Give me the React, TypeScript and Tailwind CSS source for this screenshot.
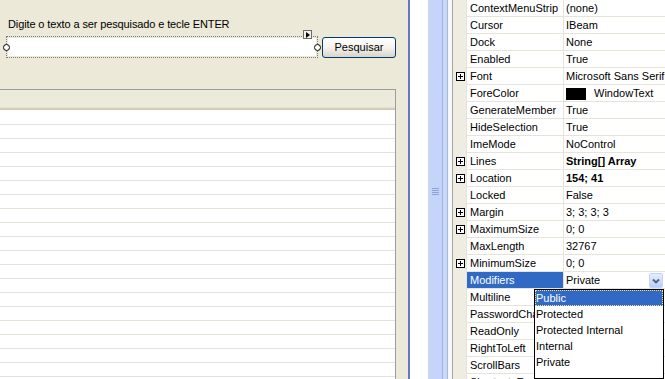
import React from 'react';

interface Prop {
  name: string;
  value: string;
  plus?: boolean;
  bold?: boolean;
  swatch?: boolean;
  selected?: boolean;
}

// values of the rows under the open dropdown are hidden by it, so they are left empty
const PROPS: Prop[] = [
  { name: 'ContextMenuStrip', value: '(none)' },
  { name: 'Cursor', value: 'IBeam' },
  { name: 'Dock', value: 'None' },
  { name: 'Enabled', value: 'True' },
  { name: 'Font', value: 'Microsoft Sans Serif; 8,25pt', plus: true },
  { name: 'ForeColor', value: 'WindowText', swatch: true },
  { name: 'GenerateMember', value: 'True' },
  { name: 'HideSelection', value: 'True' },
  { name: 'ImeMode', value: 'NoControl' },
  { name: 'Lines', value: 'String[] Array', plus: true, bold: true },
  { name: 'Location', value: '154; 41', plus: true, bold: true },
  { name: 'Locked', value: 'False' },
  { name: 'Margin', value: '3; 3; 3; 3', plus: true },
  { name: 'MaximumSize', value: '0; 0', plus: true },
  { name: 'MaxLength', value: '32767' },
  { name: 'MinimumSize', value: '0; 0', plus: true },
  { name: 'Modifiers', value: 'Private', selected: true },
  { name: 'Multiline', value: '' },
  { name: 'PasswordChar', value: '' },
  { name: 'ReadOnly', value: '' },
  { name: 'RightToLeft', value: '' },
  { name: 'ScrollBars', value: '' },
  { name: 'ShortcutsEnabled', value: '' },
];

const MODIFIERS = ['Public', 'Protected', 'Protected Internal', 'Internal', 'Private'];

function PlusBox() {
  return (
    <svg width="9" height="9" viewBox="0 0 9 9" className="block">
      <rect x="0.5" y="0.5" width="8" height="8" fill="white" stroke="black" />
      <path d="M2 4.5h5M4.5 2v5" stroke="black" strokeWidth="1" />
    </svg>
  );
}

function ComboArrow() {
  return (
    <div className="h-[15px] w-[14px] rounded-[2px] border border-[#c3d3fd] bg-linear-to-b from-[#e6eefc] to-[#b9cdf6] flex items-center justify-center">
      <svg width="8" height="6" viewBox="0 0 8 6">
        <path d="M1 1.5l3 3 3-3" fill="none" stroke="#4d6185" strokeWidth="1.8" />
      </svg>
    </div>
  );
}

export default function App() {
  return (
    <div className="flex h-[379px] w-[665px] overflow-hidden bg-[#ece9d8] text-[11px] text-black font-['Liberation_Sans',Arial,sans-serif]">
      {/* Form designer */}
      <div className="flex w-[408px] shrink-0 flex-col">
        <div className="pl-[8px] pt-[18px] leading-[13px] tracking-[-0.12px] whitespace-nowrap">
          Digite o texto a ser pesquisado e tecle ENTER
        </div>
        <div className="mt-[5px] flex items-start">
          <div className="relative ml-[6px] h-[22px] w-[312px] border border-dotted border-[#7a7a7a] p-[1px]">
            <div className="h-full w-full bg-white" />
            <div className="absolute left-[-4px] top-[7px] h-[7px] w-[7px] rounded-full border border-black bg-white" />
            <div className="absolute right-[-4px] top-[7px] h-[7px] w-[7px] rounded-full border border-black bg-white" />
            <div className="absolute right-[5px] top-[-7px] flex h-[9px] w-[9px] items-center justify-center border border-[#6b6b6b] bg-[#f4f3ee]">
              <svg width="4" height="6" viewBox="0 0 4 6">
                <path d="M0 0l4 3-4 3z" fill="black" />
              </svg>
            </div>
          </div>
          <button className="ml-[4px] mt-[1px] h-[21px] w-[74px] rounded-[3px] border border-[#003c74] bg-linear-to-b from-white via-[#f4f3ee] to-[#d8d4c8] text-center leading-[19px]">
            Pesquisar
          </button>
        </div>
        <div className="mt-[31px] flex w-[396px] flex-1 flex-col overflow-hidden border-r border-t border-[#9b9ca0] bg-white">
          <div className="h-[17px] shrink-0 bg-[#ebeadb]" />
          <div className="h-[1px] shrink-0 bg-[#e2decd]" />
          <div className="h-[1px] shrink-0 bg-[#d6d2c2]" />
          <div className="h-[1px] shrink-0 bg-[#cbc7b8]" />
          <div className="h-[1px] shrink-0 bg-white" />
          {Array.from({ length: 20 }).map((_, i) => (
            <div key={i} className="h-[14px] shrink-0 border-b border-[#e4e3db]" />
          ))}
        </div>
      </div>

      {/* Splitter strips */}
      <div className="w-[2px] shrink-0 bg-[#6576c9]" />
      <div className="w-[18px] shrink-0 bg-white" />
      <div className="flex w-[14px] shrink-0 flex-col items-center bg-[#c4d5f9] pt-[188px]">
        <div className="flex w-[7px] flex-col gap-[1px]">
          <div className="h-[1px] bg-[#8aa3d8]" />
          <div className="h-[1px] bg-[#8aa3d8]" />
          <div className="h-[1px] bg-[#8aa3d8]" />
          <div className="h-[1px] bg-[#8aa3d8]" />
        </div>
      </div>
      <div className="w-[1px] shrink-0 bg-[#9fb4e3]" />
      <div className="w-[4px] shrink-0 bg-[#cad8f7]" />
      <div className="w-[1px] shrink-0 bg-[#a9b9da]" />
      <div className="w-[4px] shrink-0 bg-[#f6f7fb]" />
      <div className="w-[1px] shrink-0 bg-[#a7a6a0]" />

      {/* Property grid */}
      <div className="relative flex-1 overflow-hidden bg-white">
        {PROPS.map((p) => (
          <div key={p.name} className="flex h-[17px] leading-[16px]">
            <div className="flex w-[13px] shrink-0 items-center justify-center bg-[#efede2] pb-[1px] pl-[1px]">
              {p.plus && <PlusBox />}
            </div>
            <div className="w-[1px] shrink-0 bg-[#e6e4d8]" />
            <div className="w-[96px] shrink-0 border-b border-[#e6e4d8]">
              <div className={`h-[16px] overflow-hidden whitespace-nowrap pl-[3px] ${p.selected ? 'bg-[#316ac5] text-white' : ''}`}>
                {p.name}
              </div>
            </div>
            <div className="w-[1px] shrink-0 bg-[#e6e4d8]" />
            <div className="flex min-w-0 flex-1 items-start border-b border-[#e6e4d8] pl-[2px]">
              {p.swatch && <div className="mr-[8px] mt-[3px] h-[12px] w-[20px] shrink-0 bg-black" />}
              <div className={`min-w-0 flex-1 overflow-hidden whitespace-nowrap ${p.bold ? 'font-bold' : ''}`}>
                {p.value}
              </div>
              {p.selected && (
                <div className="mr-[2px] mt-[1px] shrink-0">
                  <ComboArrow />
                </div>
              )}
            </div>
          </div>
        ))}

        {/* Modifiers dropdown */}
        <div className="absolute left-[81px] top-[289px] h-[90px] w-[130px] border border-black bg-white">
          {MODIFIERS.map((m, i) => (
            <div
              key={m}
              className={`h-[16px] whitespace-nowrap pl-[1px] leading-[16px] ${
                i === 0 ? 'bg-[#316ac5] text-white outline-1 outline-dotted outline-[#ffe08a] -outline-offset-1' : ''
              }`}
            >
              {m}
            </div>
          ))}
        </div>
      </div>
    </div>
  );
}
